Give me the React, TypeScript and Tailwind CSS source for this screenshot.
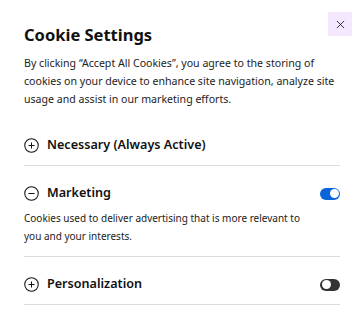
import React from "react";

function CircleIcon({ open }: { open: boolean }) {
  return (
    <svg width="15" height="15" viewBox="0 0 16 16" className="shrink-0 text-[#111]">
      <circle cx="8" cy="8" r="7.2" fill="none" stroke="currentColor" strokeWidth="1.1" />
      <path d="M4.8 8h6.4" stroke="currentColor" strokeWidth="1.1" />
      {!open && <path d="M8 4.8v6.4" stroke="currentColor" strokeWidth="1.1" />}
    </svg>
  );
}

function Toggle({ on }: { on: boolean }) {
  return (
    <span
      className={
        on
          ? "flex h-[12px] w-[20px] items-center justify-end rounded-full bg-[#0a66d8] px-[1.5px]"
          : "flex h-[12px] w-[20px] items-center justify-start rounded-full bg-[#333] px-[1.5px]"
      }
    >
      <span className="h-[9px] w-[9px] rounded-full bg-white" />
    </span>
  );
}

interface SectionProps {
  title: string;
  open?: boolean;
  toggle?: boolean;
  on?: boolean;
  children?: React.ReactNode;
}

function Section({ title, open = false, toggle, on = false, children }: SectionProps) {
  return (
    <div className="border-b border-[#dcdcdc] pt-[8px]">
      <div className="flex h-[39px] items-center">
        <CircleIcon open={open} />
        <span className="ml-[8px] flex-1 text-[12.6px] font-semibold text-[#111]">{title}</span>
        {toggle && <Toggle on={on} />}
      </div>
      {children && (
        <p className="-mt-[4px] pb-[11px] pr-[24px] text-[10px] leading-[18px] text-[#222]">
          {children}
        </p>
      )}
    </div>
  );
}

export default function App() {
  return (
    <div
      className="relative h-[313px] w-[364px] overflow-hidden bg-white"
      style={{ fontFamily: '"Noto Sans", Inter, sans-serif' }}
    >
      <button className="absolute right-[12px] top-[12px] flex h-[24px] w-[24px] items-center justify-center bg-[#f3e8fd] text-[#222]">
        <svg width="9" height="9" viewBox="0 0 10 10">
          <path d="M1 1l8 8M9 1l-8 8" stroke="currentColor" strokeWidth="1" />
        </svg>
      </button>
      <div className="px-[24px] pt-[24px]">
        <h2 className="text-[16.5px] font-bold leading-[22px] text-[#111]">Cookie Settings</h2>
        <p className="mt-[8px] text-[10.6px] leading-[18px] text-[#222]">
          By clicking “Accept All Cookies”, you agree to the storing of cookies on your device to
          enhance site navigation, analyze site usage and assist in our marketing efforts.
        </p>
        <div className="mt-[10px] w-[316px]">
          <Section title="Necessary (Always Active)" />
          <Section title="Marketing" open toggle on>
            Cookies used to deliver advertising that is more relevant to you and your interests.
          </Section>
          <Section title="Personalization" toggle />
        </div>
      </div>
    </div>
  );
}
